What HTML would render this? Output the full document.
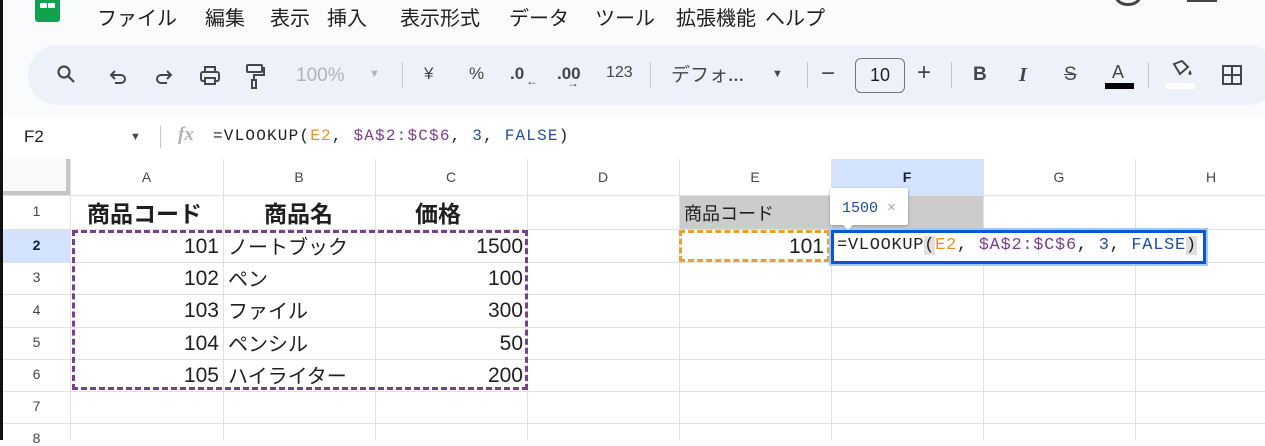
<!DOCTYPE html><html><head><meta charset="utf-8"><style>
*{margin:0;padding:0;box-sizing:border-box}
body{width:1265px;height:440px;overflow:hidden;background:#f9fbfd;position:relative;font-family:"Liberation Sans","Noto Sans CJK JP",sans-serif;color:#444746}
.a{position:absolute}
.menu{top:4px;font-size:20px;line-height:26px;color:#1f1f1f;white-space:nowrap;font-family:"Noto Sans CJK JP",sans-serif}
.tb{left:28px;top:45px;width:1250px;height:60px;background:#edf2fa;border-radius:30px}
.ic{position:absolute;font-size:18px;color:#444746;top:64px}
.sep{position:absolute;top:62px;width:1px;height:26px;background:#c7c7c7}
.grid{left:3px;top:159px;width:1262px;height:281px;background:#fff}
.mono{font-family:"Liberation Mono","DejaVu Sans Mono",monospace}
.vl{position:absolute;width:1px;background:#e1e1e1;top:159px;height:281px}
.hl{position:absolute;height:1px;background:#e1e1e1;left:3px;width:1262px}
.ch{position:absolute;top:159px;height:36px;line-height:36px;text-align:center;font-size:14px;color:#444746}
.rh{position:absolute;left:3px;width:67px;text-align:center;font-size:14px;color:#444746}
.c{position:absolute;font-size:21px;line-height:24px;color:#1f1f1f;white-space:nowrap}
.j{font-family:"Noto Sans CJK JP",sans-serif;font-size:20px;line-height:24px}
</style></head><body>
<div class="a" style="left:0;top:0;width:3px;height:440px;background:#111"></div>
<div class="a" style="left:35px;top:-4px;width:25px;height:26px;background:#11a24f;border-radius:3px"></div>
<div class="a" style="left:40px;top:3px;width:7px;height:5px;background:#fff"></div>
<div class="a" style="left:48px;top:3px;width:7px;height:5px;background:#fff"></div>
<div class="a menu" style="left:97px">ファイル</div>
<div class="a menu" style="left:205px">編集</div>
<div class="a menu" style="left:270px">表示</div>
<div class="a menu" style="left:327px">挿入</div>
<div class="a menu" style="left:400px">表示形式</div>
<div class="a menu" style="left:509px">データ</div>
<div class="a menu" style="left:595px">ツール</div>
<div class="a menu" style="left:676px">拡張機能</div>
<div class="a menu" style="left:765px">ヘルプ</div>
<div class="a" style="left:1115px;top:-12px;width:26px;height:18px;border:3px solid #444;border-radius:50%"></div>
<div class="a" style="left:1187px;top:-4px;width:30px;height:6px;border-bottom:3px solid #444"></div>
<div class="a tb"></div>
<svg class="a" style="left:56px;top:64px" width="22" height="22" viewBox="0 0 22 22" fill="none" stroke="#444746" stroke-width="2.2"><circle cx="8" cy="8" r="5.5"/><path d="M12 12l6 6"/></svg>
<svg class="a" style="left:107px;top:66px" width="22" height="22" viewBox="0 0 22 22" fill="none" stroke="#444746" stroke-width="2"><path d="M5 9h9a4 4 0 010 8H8M8 5L4 9l4 4"/></svg>
<svg class="a" style="left:153px;top:66px" width="22" height="22" viewBox="0 0 22 22" fill="none" stroke="#444746" stroke-width="2"><path d="M17 9H8a4 4 0 000 8h6M14 5l4 4-4 4"/></svg>
<svg class="a" style="left:198px;top:64px" width="24" height="24" viewBox="0 0 24 24" fill="none" stroke="#444746" stroke-width="2"><rect x="7" y="3" width="10" height="5"/><rect x="3" y="8" width="18" height="9" rx="2"/><rect x="7" y="14" width="10" height="6" fill="#edf2fa"/></svg>
<svg class="a" style="left:243px;top:63px" width="24" height="28" viewBox="0 0 24 28" fill="none" stroke="#444746" stroke-width="2"><rect x="4" y="2" width="15" height="7" rx="1"/><path d="M19 5h2v7H11v5"/><rect x="9" y="17" width="4" height="8"/></svg>
<div class="ic" style="left:296px;top:65px;color:#b0b3b8;font-size:19px">100%</div>
<div class="ic" style="left:369px;top:68px;font-size:11px;color:#b0b3b8">▼</div>
<div class="sep" style="left:402px"></div>
<div class="ic" style="left:424px;font-size:17px">¥</div>
<div class="ic" style="left:469px;font-size:17px">%</div>
<div class="ic" style="left:510px;font-size:17px;font-weight:bold">.0</div>
<div class="ic" style="left:526px;top:74px;font-size:12px">←</div>
<div class="ic" style="left:557px;font-size:17px;font-weight:bold">.00</div>
<div class="ic" style="left:567px;top:76px;font-size:12px">→</div>
<div class="ic" style="left:606px;font-size:16px">123</div>
<div class="sep" style="left:650px"></div>
<div class="ic" style="left:671px;top:61px;font-size:19px;font-family:'Noto Sans CJK JP',sans-serif;line-height:26px">デフォ...</div>
<div class="ic" style="left:772px;top:68px;font-size:11px">▼</div>
<div class="sep" style="left:807px"></div>
<div class="ic" style="left:821px;top:60px;font-size:24px">−</div>
<div class="a" style="left:855px;top:58px;width:50px;height:35px;border:1px solid #747775;border-radius:6px;text-align:center;line-height:33px;font-size:18px;color:#1f1f1f">10</div>
<div class="ic" style="left:917px;top:59px;font-size:24px">+</div>
<div class="sep" style="left:951px"></div>
<div class="ic" style="left:973px;font-weight:bold;font-size:19px">B</div>
<div class="ic" style="left:1019px;font-weight:bold;font-style:italic;font-size:20px;font-family:'Liberation Serif',serif">I</div>
<div class="ic" style="left:1064px;font-size:19px;text-decoration:line-through">S</div>
<div class="ic" style="left:1112px;top:62px;font-size:18px">A</div>
<div class="a" style="left:1105px;top:83px;width:29px;height:6px;background:#000"></div>
<div class="sep" style="left:1148px"></div>
<svg class="a" style="left:1170px;top:60px" width="26" height="22" viewBox="0 0 26 22"><path d="M4 4l8-3 6 6-8 7z" fill="none" stroke="#444746" stroke-width="2"/><path d="M20 10c2 3 2 5 0 5s-2-2 0-5z" fill="#444746"/></svg>
<div class="a" style="left:1166px;top:83px;width:29px;height:6px;background:#fff"></div>
<svg class="a" style="left:1221px;top:64px" width="22" height="22" viewBox="0 0 22 22" fill="none" stroke="#444746" stroke-width="2"><rect x="2" y="2" width="18" height="18"/><path d="M11 2v18M2 11h18"/></svg>
<div class="a" style="left:3px;top:117px;width:1262px;height:42px;background:#fff"></div>
<div class="a" style="left:24px;top:127px;font-size:17px;color:#1f1f1f">F2</div>
<div class="a" style="left:130px;top:131px;font-size:11px">▼</div>
<div class="a" style="left:160px;top:126px;width:1px;height:22px;background:#c7c7c7"></div>
<div class="a" style="left:178px;top:124px;font-size:19px;font-style:italic;font-weight:bold;color:#b0b3b8;font-family:'Liberation Serif',serif">fx</div>
<div class="a mono" style="left:213px;top:127px;font-size:16px;letter-spacing:1.2px;color:#1f1f1f;white-space:nowrap">=VLOOKUP(<span style="color:#e8931f">E2</span>, <span style="color:#7b3d8e">$A$2:$C$6</span>, <span style="color:#1d4ea0">3</span>, <span style="color:#1d4ea0">FALSE</span>)</div>
<div class="a grid"></div>
<div class="a" style="left:3px;top:159px;width:67px;height:36px;background:#f8f9fa;border-right:4px solid #c4c7c5;border-bottom:4px solid #c4c7c5"></div>
<div class="a" style="left:831px;top:159px;width:152px;height:36px;background:#d3e3fd"></div>
<div class="a" style="left:3px;top:230px;width:67px;height:32px;background:#d3e3fd"></div>
<div class="a" style="left:679px;top:195px;width:304px;height:35px;background:#cccccc"></div>
<div class="hl" style="top:195px"></div><div class="hl" style="top:229px"></div><div class="hl" style="top:262px"></div><div class="hl" style="top:294px"></div><div class="hl" style="top:327px"></div><div class="hl" style="top:359px"></div><div class="hl" style="top:391px"></div><div class="hl" style="top:423px"></div>
<div class="vl" style="left:70px"></div><div class="vl" style="left:223px"></div><div class="vl" style="left:375px"></div><div class="vl" style="left:527px"></div><div class="vl" style="left:679px"></div><div class="vl" style="left:831px"></div><div class="vl" style="left:983px"></div><div class="vl" style="left:1135px"></div>
<div class="ch" style="left:70px;width:153px">A</div><div class="ch" style="left:223px;width:152px">B</div><div class="ch" style="left:375px;width:152px">C</div><div class="ch" style="left:527px;width:152px">D</div><div class="ch" style="left:679px;width:152px">E</div><div class="ch" style="left:831px;width:152px;font-weight:bold;color:#0b1f4d">F</div><div class="ch" style="left:983px;width:152px">G</div><div class="ch" style="left:1135px;width:152px">H</div>
<div class="rh" style="top:203px">1</div><div class="rh" style="top:237px;font-weight:bold;color:#0b1f4d">2</div><div class="rh" style="top:269px">3</div><div class="rh" style="top:302px">4</div><div class="rh" style="top:334px">5</div><div class="rh" style="top:366px">6</div><div class="rh" style="top:398px">7</div><div class="rh" style="top:430px">8</div>
<div class="c j" style="left:87px;top:198px;font-weight:bold;font-size:23px;line-height:28px">商品コード</div>
<div class="c j" style="left:264px;top:198px;font-weight:bold;font-size:23px;line-height:28px">商品名</div>
<div class="c j" style="left:415px;top:198px;font-weight:bold;font-size:23px;line-height:28px">価格</div>
<div class="c" style="left:70px;top:235px;width:149px;text-align:right">101</div><div class="c j" style="left:228px;top:234px">ノートブック</div><div class="c" style="left:375px;top:235px;width:148px;text-align:right">1500</div>
<div class="c" style="left:70px;top:267px;width:149px;text-align:right">102</div><div class="c j" style="left:228px;top:266px">ペン</div><div class="c" style="left:375px;top:267px;width:148px;text-align:right">100</div>
<div class="c" style="left:70px;top:299px;width:149px;text-align:right">103</div><div class="c j" style="left:228px;top:298px">ファイル</div><div class="c" style="left:375px;top:299px;width:148px;text-align:right">300</div>
<div class="c" style="left:70px;top:332px;width:149px;text-align:right">104</div><div class="c j" style="left:228px;top:331px">ペンシル</div><div class="c" style="left:375px;top:332px;width:148px;text-align:right">50</div>
<div class="c" style="left:70px;top:364px;width:149px;text-align:right">105</div><div class="c j" style="left:228px;top:363px">ハイライター</div><div class="c" style="left:375px;top:364px;width:148px;text-align:right">200</div>
<div class="a" style="left:72px;top:230px;width:456px;height:160px;border:3px dashed #7b3d8e"></div>
<div class="c j" style="left:684px;top:201px;font-size:18px">商品コード</div>
<div class="a" style="left:679px;top:230px;width:151px;height:32px;border:3px dashed #f09d30"></div>
<div class="c" style="left:679px;top:235px;width:145px;text-align:right">101</div>
<div class="a" style="left:829px;top:228px;width:379px;height:38px;border:3px solid #a8c7fa"></div>
<div class="a" style="left:831px;top:230px;width:375px;height:34px;border:3px solid #0b57d0;background:#fff"></div>
<div class="a mono" style="left:837px;top:236px;font-size:17px;letter-spacing:0.7px;color:#1f1f1f;white-space:nowrap">=VLOOKUP<span style="background:#e0e0e0">(</span><span style="color:#e8931f">E2</span>, <span style="color:#7b3d8e">$A$2:$C$6</span>, <span style="color:#1d4ea0">3</span>, <span style="color:#1d4ea0">FALSE</span><span style="background:#e0e0e0">)</span></div>
<div class="a" style="left:830px;top:188px;width:78px;height:37px;background:#fff;box-shadow:0 1px 3px rgba(0,0,0,.3);border-radius:2px"></div>
<div class="a" style="left:840px;top:221px;width:0;height:0;border-left:8px solid transparent;border-right:8px solid transparent;border-top:9px solid #fff"></div>
<div class="a mono" style="left:842px;top:199px;font-size:15px;color:#1d4ea0">1500 <span style="color:#aaa;font-family:'Liberation Sans',sans-serif">×</span></div>
</body></html>
